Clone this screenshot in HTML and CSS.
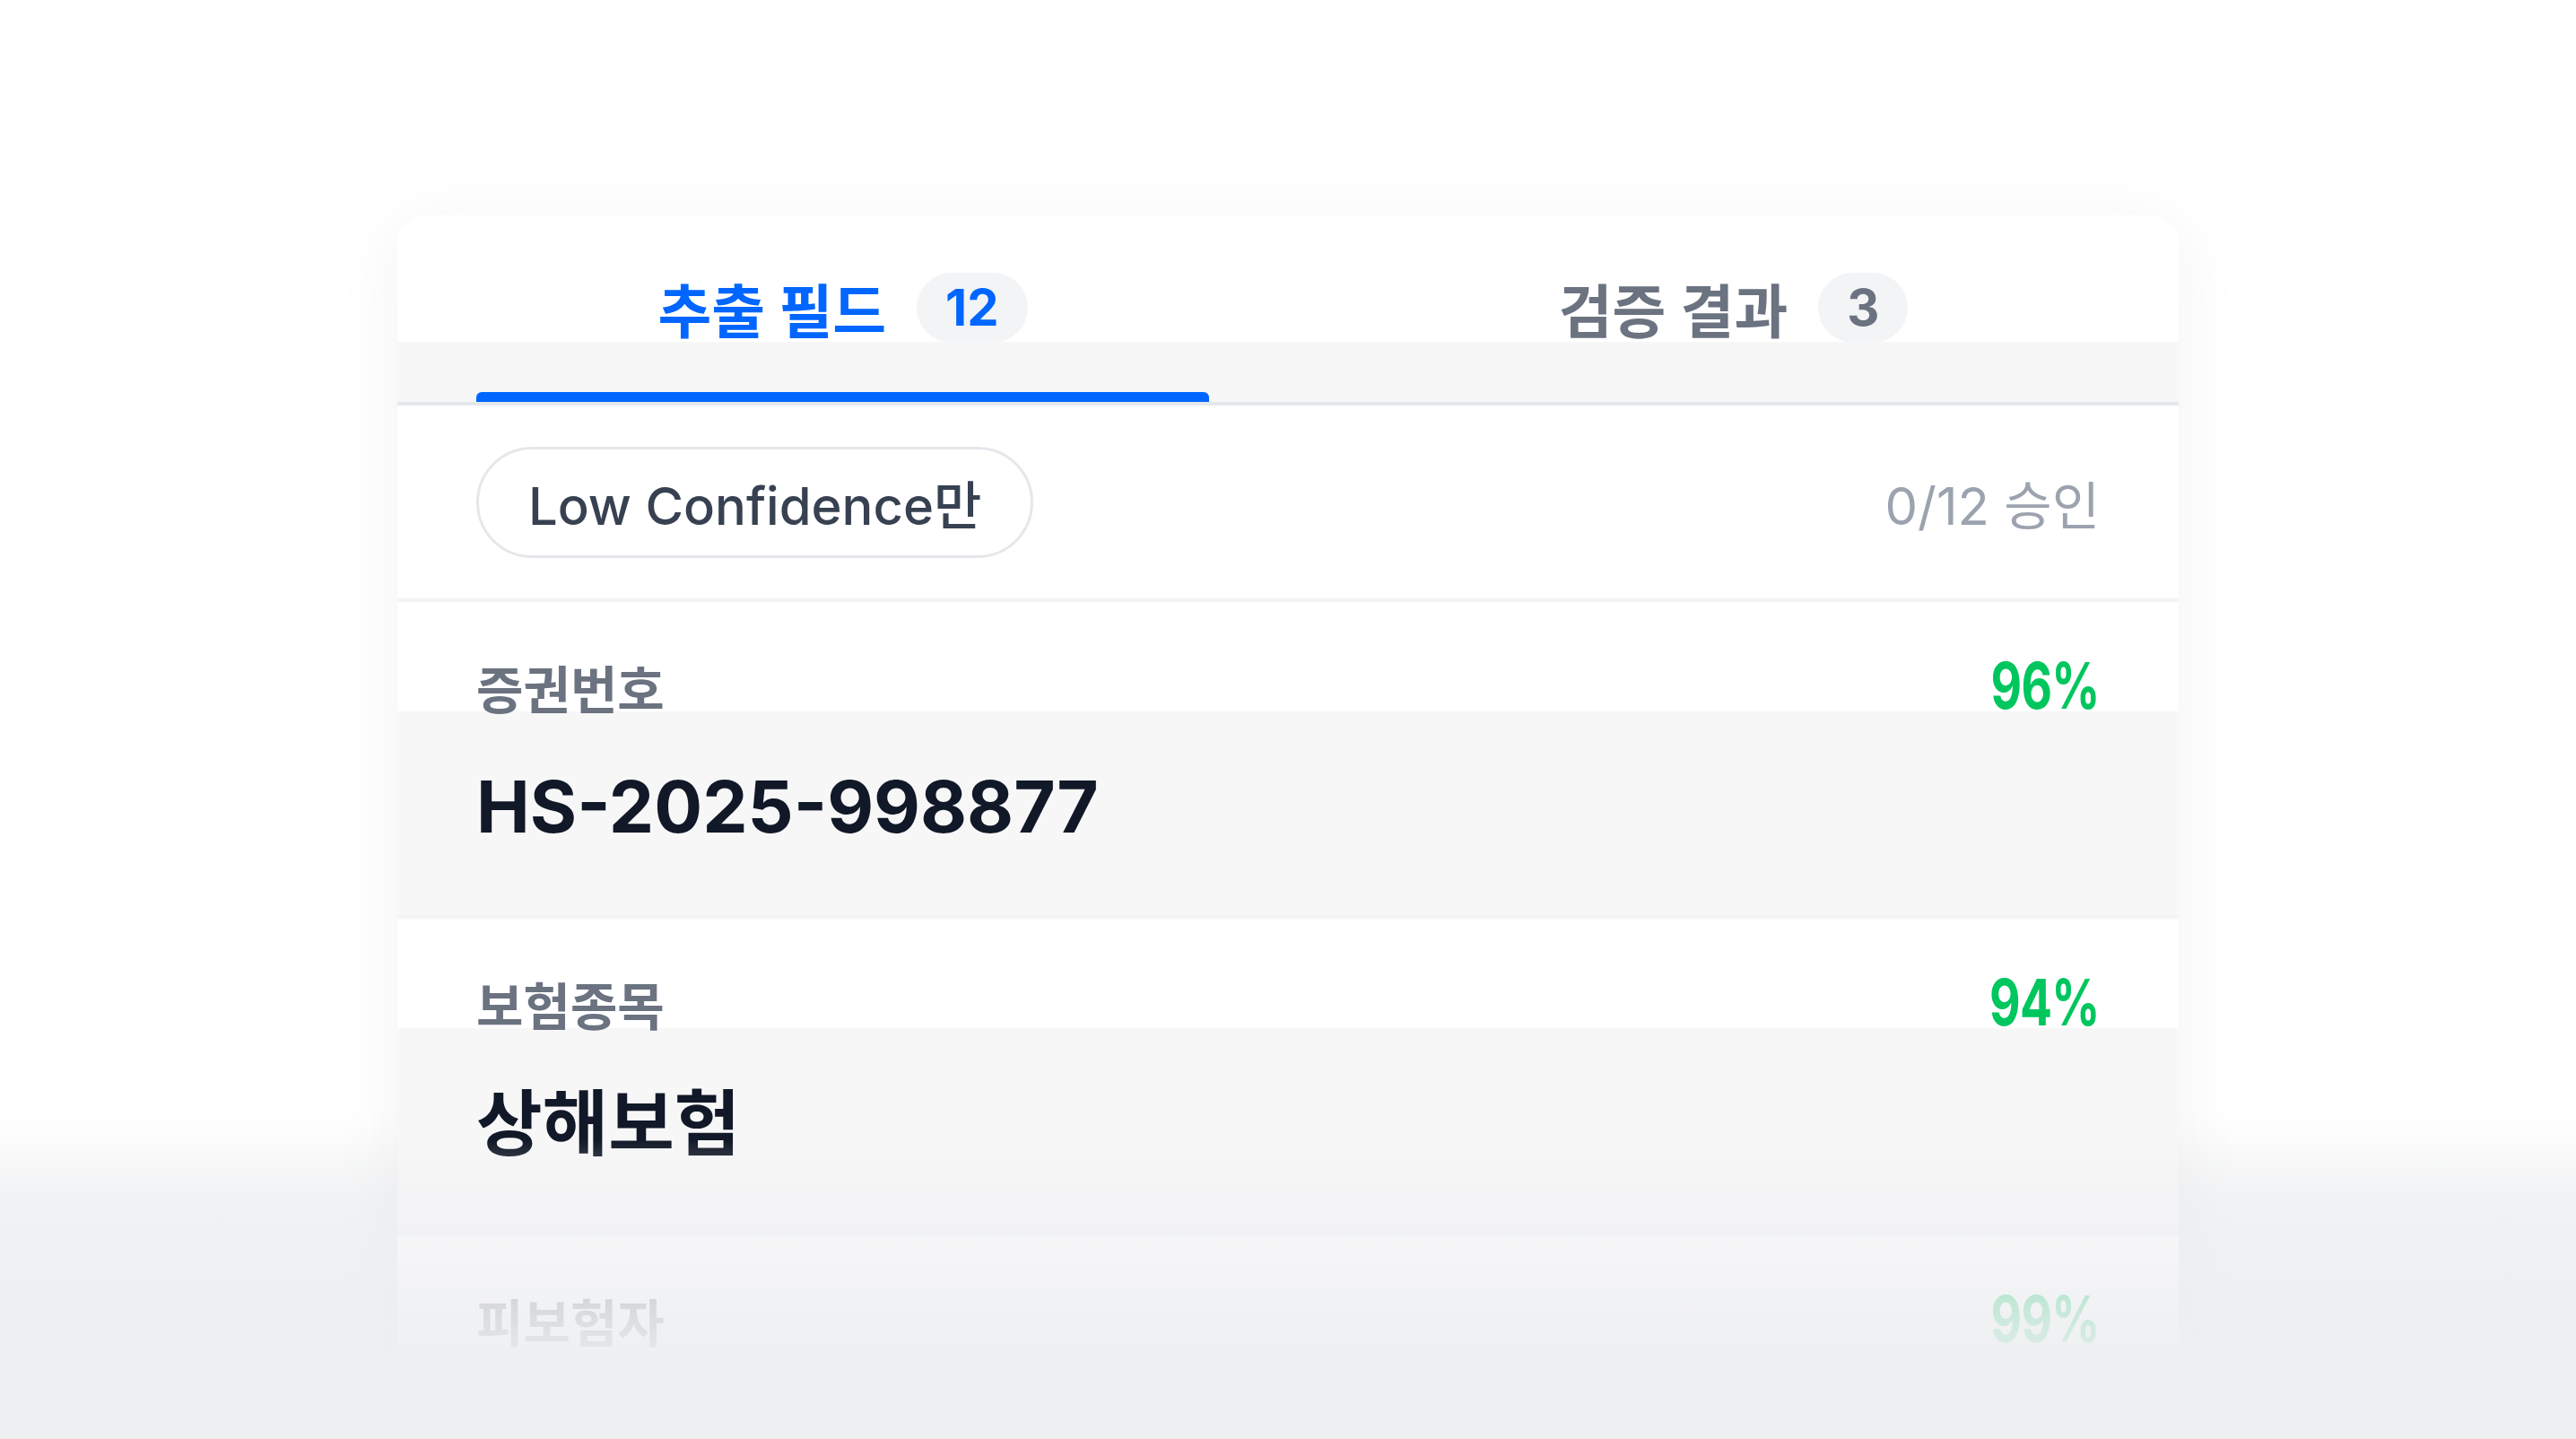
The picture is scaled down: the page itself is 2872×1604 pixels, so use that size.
FILE: index.html
```html
<!DOCTYPE html>
<html lang="ko">
<head>
    <meta charset="UTF-8">
    <meta name="viewport" content="width=device-width, initial-scale=1.0">
    <title>추출 필드</title>
    <link rel="stylesheet" href="styles.css">
</head>
<body>

    <div class="card">
        <div class="tabs">
            <div class="tab active">
                <div class="tab-label">
                    <span>추출 필드</span>
                    <span class="badge">12</span>
                </div>
                <div class="tab-bar"></div>
            </div>
            <div class="tab">
                <div class="tab-label">
                    <span>검증 결과</span>
                    <span class="badge">3</span>
                </div>
                <div class="tab-bar"></div>
            </div>
        </div>

        <div class="toolbar">
            <button class="chip">Low Confidence만</button>
            <span class="progress">0/12 승인</span>
        </div>

        <div class="field">
            <div class="field-head">
                <span class="field-label">증권번호</span>
                <span class="score">96%</span>
            </div>
            <div class="field-value">HS-2025-998877</div>
        </div>

        <div class="field">
            <div class="field-head">
                <span class="field-label">보험종목</span>
                <span class="score">94%</span>
            </div>
            <div class="field-value">상해보험</div>
        </div>

        <div class="field">
            <div class="field-head">
                <span class="field-label">피보험자</span>
                <span class="score">99%</span>
            </div>
            <div class="field-value">&nbsp;</div>
        </div>
    </div>

    <!-- bottom fade over the list -->
    <div class="fade"></div>

</body>
</html>
```

FILE: styles.css
```css
body {
    margin: 0;
    height: 1604px;
    overflow: hidden;
    position: relative;
    font-family: Inter, "Noto Sans CJK KR", sans-serif;
    background: linear-gradient(to bottom, #ffffff 0, #ffffff 1240px, #f4f5f6 1340px, #eeeff1 1604px);
}
.card {
    width: 1986px;
    min-height: 1500px;
    margin: 240px auto 0;
    background: #fff;
    border-radius: 32px;
    box-shadow: 0 10px 80px rgba(15, 23, 42, 0.05);
    overflow: hidden;
}
.tabs {
    display: flex;
    gap: 176px;
    padding: 0 88px;
    border-bottom: 4px solid #e5e8eb;
    background: linear-gradient(to bottom, #fff 0, #fff 141px, #f7f7f8 141px);
}
.tab {
    flex: 1;
    height: 208px;
    box-sizing: border-box;
    padding-top: 64px;
    display: flex;
    flex-direction: column;
    align-items: center;
}
.tab-label {
    display: flex;
    align-items: center;
    gap: 34px;
    height: 78px;
    font-size: 65px;
    font-weight: 600;
    color: #6b7280;
}
.badge {
    height: 78px;
    padding: 0 32px;
    border-radius: 39px;
    background: #f2f4f6;
    font-size: 56px;
    font-weight: 700;
    line-height: 78px;
}
.tab.active .tab-label {
    color: #0066ff;
    font-weight: 700;
}
.tab-bar {
    margin-top: auto;
    align-self: stretch;
    height: 11px;
    border-radius: 6px 6px 0 0;
}
.tab.active .tab-bar {
    background: #0066ff;
}
.toolbar {
    height: 219px;
    box-sizing: border-box;
    padding: 0 88px;
    display: flex;
    align-items: center;
    justify-content: space-between;
    border-bottom: 4px solid #f1f3f5;
}
.chip {
    height: 124px;
    box-sizing: border-box;
    padding: 0 55px;
    border: 3px solid #e5e7eb;
    border-radius: 62px;
    background: #fff;
    font-family: inherit;
    font-size: 58px;
    font-weight: 500;
    color: #374151;
}
.progress {
    font-size: 58px;
    color: #9ca3af;
}
.field {
    border-bottom: 4px solid #f3f4f6;
}
.field-head {
    height: 122px;
    box-sizing: border-box;
    padding: 57px 88px 0;
    display: flex;
    align-items: baseline;
    justify-content: space-between;
}
.field-label {
    font-size: 57px;
    font-weight: 600;
    line-height: 1;
    color: #6b7280;
}
.score {
    display: inline-block;
    font-size: 72px;
    font-weight: 700;
    line-height: 1;
    color: #00c65e;
    letter-spacing: -1px;
    transform: scaleX(0.74);
    transform-origin: right bottom;
}
.field-value {
    background: #f7f7f8;
    padding: 58px 88px 73px;
    font-size: 80px;
    font-weight: 700;
    line-height: 96px;
    color: #111827;
}
.fade {
    position: absolute;
    left: 0;
    right: 0;
    top: 1270px;
    bottom: 0;
    background: linear-gradient(to bottom,
        rgba(238, 239, 241, 0) 0%,
        rgba(238, 239, 241, 0.4) 18%,
        rgba(238, 239, 241, 0.82) 55%,
        #eeeff1 80%);
}
```
